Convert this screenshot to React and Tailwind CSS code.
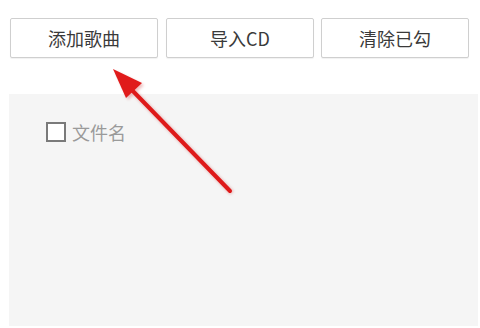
const buttons = ['添加歌曲', '导入CD', '清除已勾'];

const Arrow = () => (
  <svg
    className="absolute left-0 top-0 pointer-events-none"
    width="480"
    height="328"
    viewBox="0 0 480 328"
  >
    <defs>
      <filter id="blur" x="-20%" y="-20%" width="140%" height="140%">
        <feGaussianBlur stdDeviation="1.6" />
      </filter>
    </defs>
    {/* soft shadow */}
    <g opacity="0.25" filter="url(#blur)" transform="translate(2 2)">
      <line x1="230" y1="191" x2="128" y2="86" stroke="#b00" strokeWidth="5" />
      <polygon points="113,69 142,83 126,98" fill="#b00" />
    </g>
    <line
      x1="230"
      y1="191"
      x2="128"
      y2="86"
      stroke="#de1a1a"
      strokeWidth="4"
      strokeLinecap="round"
    />
    <polygon points="113,69 142,83 126,98" fill="#e01b1b" />
  </svg>
);

export default function App() {
  return (
    <div
      className="relative w-[480px] h-[328px] bg-white overflow-hidden"
      style={{ fontFamily: '"Noto Sans CJK SC", "Noto Sans", sans-serif' }}
    >
      <div className="flex pl-[10px] pt-[18px]">
        {buttons.map((b, i) => (
          <button
            key={b}
            className={`h-[40px] w-[148px] flex items-center justify-center rounded-[2px] border border-[#cfcfcf] bg-white text-[18px] text-[#3a3a3a] shadow-[0_1px_1px_rgba(0,0,0,0.06)] ${
              i === 0 ? '' : i === 1 ? 'ml-[8px]' : 'ml-[7px]'
            }`}
          >
            {b}
          </button>
        ))}
      </div>

      <div className="ml-[9px] mt-[36px] w-[469px] h-[232px] bg-[#f5f5f5] pt-[28px] pl-[37px]">
        <label className="flex items-center gap-[6px]">
          <span className="w-[20px] h-[20px] border-2 border-[#7a7a7a] bg-white" />
          <span className="text-[18px] leading-[20px] text-[#9a9a9a]">文件名</span>
        </label>
      </div>

      <Arrow />
    </div>
  );
}
